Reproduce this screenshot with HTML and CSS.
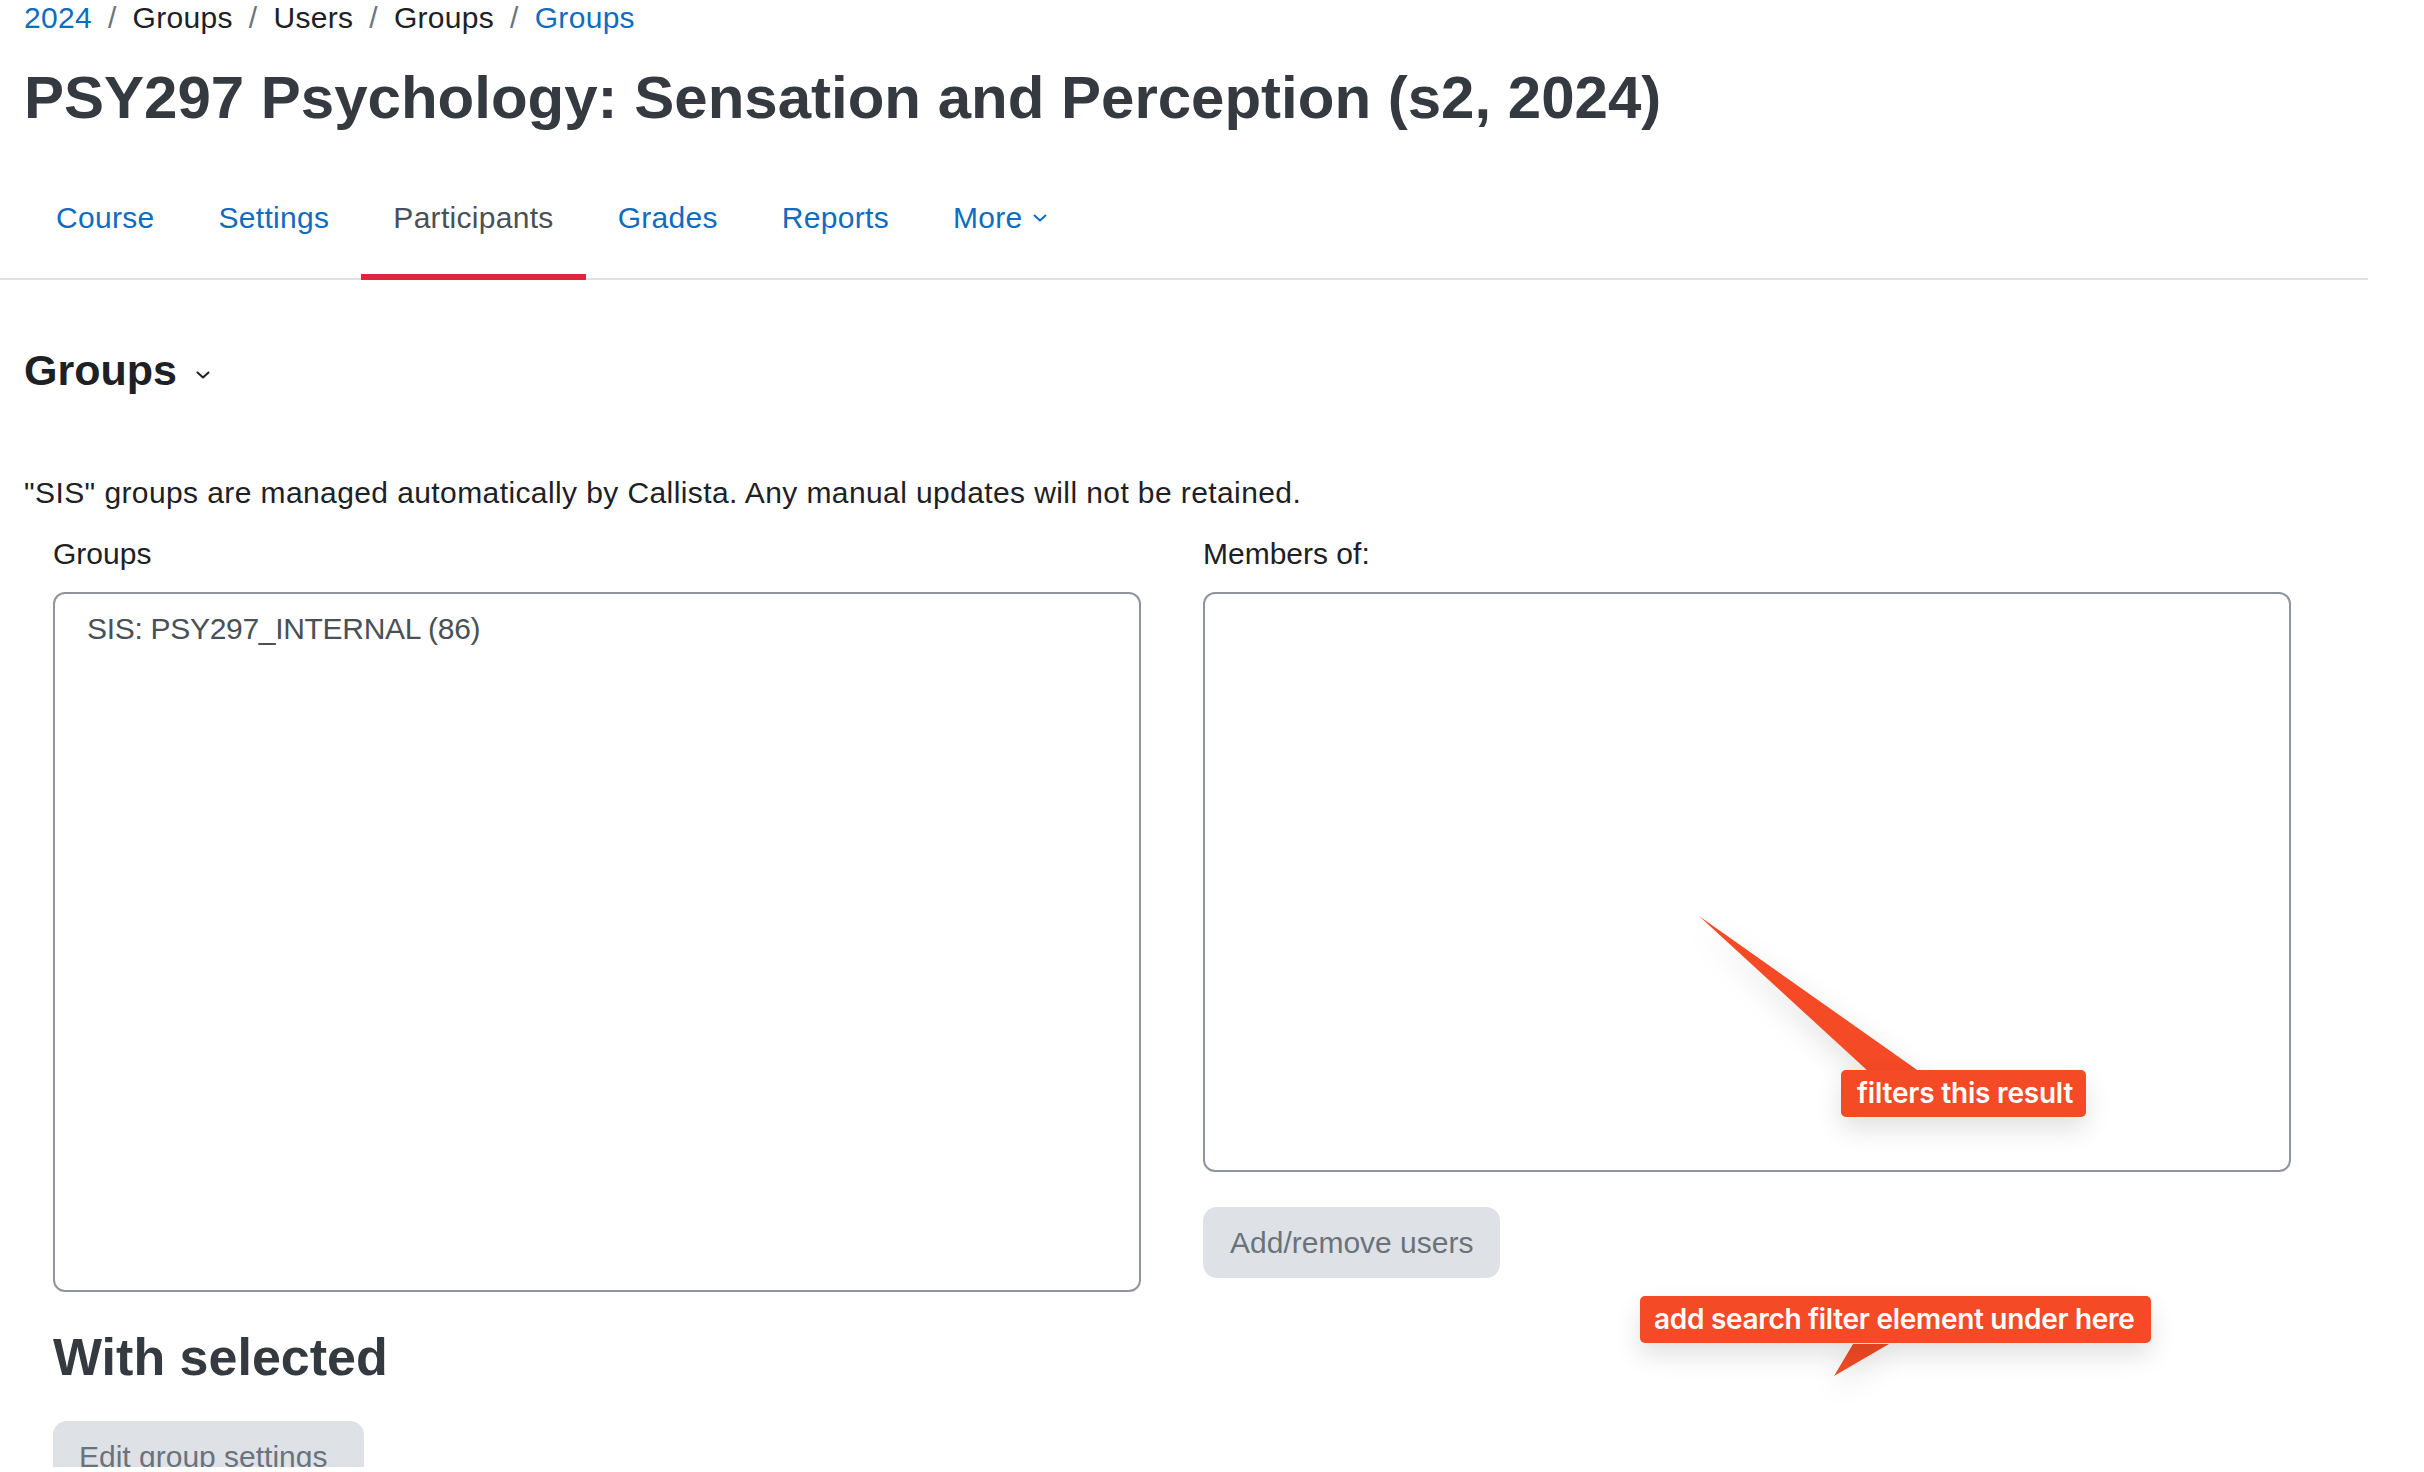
FILE: index.html
```html
<!DOCTYPE html>
<html lang="en">
<head>
<meta charset="utf-8">
<title>PSY297 Groups</title>
<link rel="stylesheet" href="styles.css">
</head>
<body>
<div class="page">
  <nav class="breadcrumb">
    <a class="crumb link" href="#">2024</a>
    <span class="sep">/</span>
    <span class="crumb">Groups</span>
    <span class="sep">/</span>
    <span class="crumb">Users</span>
    <span class="sep">/</span>
    <span class="crumb">Groups</span>
    <span class="sep">/</span>
    <a class="crumb link" href="#">Groups</a>
  </nav>

  <h1 class="page-title">PSY297 Psychology: Sensation and Perception (s2, 2024)</h1>

  <div class="secondary-nav">
    <ul class="tabs">
      <li><a class="tab" href="#">Course</a></li>
      <li><a class="tab" href="#">Settings</a></li>
      <li><a class="tab active" href="#">Participants</a></li>
      <li><a class="tab" href="#">Grades</a></li>
      <li><a class="tab" href="#">Reports</a></li>
      <li><a class="tab" href="#">More<svg class="tab-caret" width="14" height="8" viewBox="0 0 14 8"><path d="M1.5 1.5 L7 6.5 L12.5 1.5" fill="none" stroke="#0f6cbf" stroke-width="2" stroke-linecap="round" stroke-linejoin="round"/></svg></a></li>
    </ul>
  </div>

  <div class="content">
    <h2 class="tertiary-title">Groups<svg class="title-caret" width="14" height="8" viewBox="0 0 14 8"><path d="M1.5 1.5 L7 6.5 L12.5 1.5" fill="none" stroke="#1d2125" stroke-width="2" stroke-linecap="round" stroke-linejoin="round"/></svg></h2>

    <p class="notice">"SIS" groups are managed automatically by Callista. Any manual updates will not be retained.</p>

    <div class="groups-grid">
      <div class="col">
        <label class="field-label">Groups</label>
        <div class="select select-tall">
          <div class="option">SIS: PSY297_INTERNAL (86)</div>
        </div>
        <h3 class="with-selected">With selected</h3>
        <button class="btn btn-edit" disabled>Edit group settings</button>
      </div>
      <div class="col">
        <label class="field-label">Members of:</label>
        <div class="select select-short"></div>
        <button class="btn btn-add" disabled>Add/remove users</button>
      </div>
    </div>
  </div>

  <svg class="arrow arrow-one" width="250" height="175" viewBox="0 0 250 175"><polygon points="11,12 181,168 232,168" fill="#f44a25"/></svg>
  <div class="callout callout-one">filters this result</div>

  <svg class="arrow arrow-two" width="90" height="45" viewBox="0 0 90 45"><polygon points="33,2 69,2 14,34" fill="#f44a25"/></svg>
  <div class="callout callout-two">add search filter element under here</div>
</div>
</body>
</html>
```

FILE: styles.css
```css
* { box-sizing: border-box; }

html, body {
  margin: 0;
  padding: 0;
  background: #ffffff;
}

body {
  font-family: "Liberation Sans", Arial, sans-serif;
  font-size: 30px;
  color: #1d2125;
  overflow: hidden;
}

.page {
  position: relative;
  width: 2368px;
  height: 1472px;
}

/* breadcrumb */
.breadcrumb {
  display: flex;
  align-items: baseline;
  margin-top: -5px;
  padding-left: 24px;
  height: 45px;
  line-height: 45px;
  letter-spacing: 0.3px;
}
.crumb { color: #1d2125; text-decoration: none; }
.crumb.link { color: #0f6cbf; }
.sep { color: #6a737b; padding: 0 16px; }

/* page title */
.page-title {
  margin: 22px 0 0;
  padding-left: 24px;
  font-size: 60px;
  line-height: 72px;
  font-weight: 700;
  color: #343a40;
}

/* secondary navigation */
.secondary-nav {
  margin-top: 26px;
  height: 120px;
  box-shadow: inset 0 -2px 0 #dee2e6;
}
.tabs {
  display: flex;
  list-style: none;
  margin: 0;
  padding: 0 0 0 24px;
}
.tab {
  display: flex;
  align-items: center;
  height: 120px;
  padding: 0 32px;
  border-bottom: 6px solid transparent;
  color: #0f6cbf;
  text-decoration: none;
  line-height: 45px;
  letter-spacing: 0.3px;
}
.tab.active {
  color: #495057;
  border-bottom-color: #e1253f;
}
.tab-caret {
  margin-left: 10px;
  margin-top: 2px;
}

/* content */
.content {
  padding-left: 24px;
}
.tertiary-title {
  margin: 66px 0 0;
  font-size: 43px;
  line-height: 49px;
  font-weight: 700;
  color: #1d2125;
}
.title-caret {
  margin-left: 19px;
  vertical-align: 6px;
}

.notice {
  margin: 75px 0 0;
  line-height: 45px;
  letter-spacing: 0.4px;
}

.groups-grid {
  display: grid;
  grid-template-columns: 1088px 1088px;
  column-gap: 62px;
  margin-top: 16px;
  padding-left: 29px;
  align-items: start;
}
.col {
  display: flex;
  flex-direction: column;
  align-items: flex-start;
}
.field-label {
  display: block;
  line-height: 45px;
  margin-bottom: 16px;
}
.select {
  width: 100%;
  border: 2px solid #8f959e;
  border-radius: 12px;
  padding: 12px 32px;
  background: #fff;
}
.select-tall { height: 700px; }
.select-short { height: 580px; }
.option {
  line-height: 45px;
  color: #495057;
  letter-spacing: -0.3px;
}

.with-selected {
  margin: 34px 0 33px;
  font-size: 52px;
  line-height: 62px;
  font-weight: 700;
  color: #343a40;
}

.btn {
  font-family: "Liberation Sans", Arial, sans-serif;
  font-size: 30px;
  line-height: 45px;
  padding: 13px 27px;
  border: 0;
  border-radius: 14px;
  background: #dee2e6;
  color: #6a737b;
}
.btn-edit { padding-left: 26px; padding-right: 37px; }
.btn-add { margin-top: 35px; }

/* annotations */
.callout {
  position: absolute;
  background: #f44a25;
  color: #ffffff;
  font-family: Inter, "Noto Sans", sans-serif;
  font-weight: 600;
  font-size: 28px;
  height: 47px;
  line-height: 47px;
  border-radius: 5px;
  white-space: nowrap;
  box-shadow: 0 12px 26px rgba(0, 0, 0, 0.12);
}
.callout-one {
  left: 1841px;
  top: 1075px;
  width: 245px;
  padding-left: 16px;
  letter-spacing: -0.2px;
}
.callout-two {
  left: 1640px;
  top: 1301px;
  width: 511px;
  padding-left: 14px;
  letter-spacing: -0.3px;
}
.arrow {
  position: absolute;
  overflow: visible;
  filter: drop-shadow(0 10px 14px rgba(0, 0, 0, 0.12));
}
.arrow-one { left: 1688px; top: 909px; }
.arrow-two { left: 1820px; top: 1347px; }
```
